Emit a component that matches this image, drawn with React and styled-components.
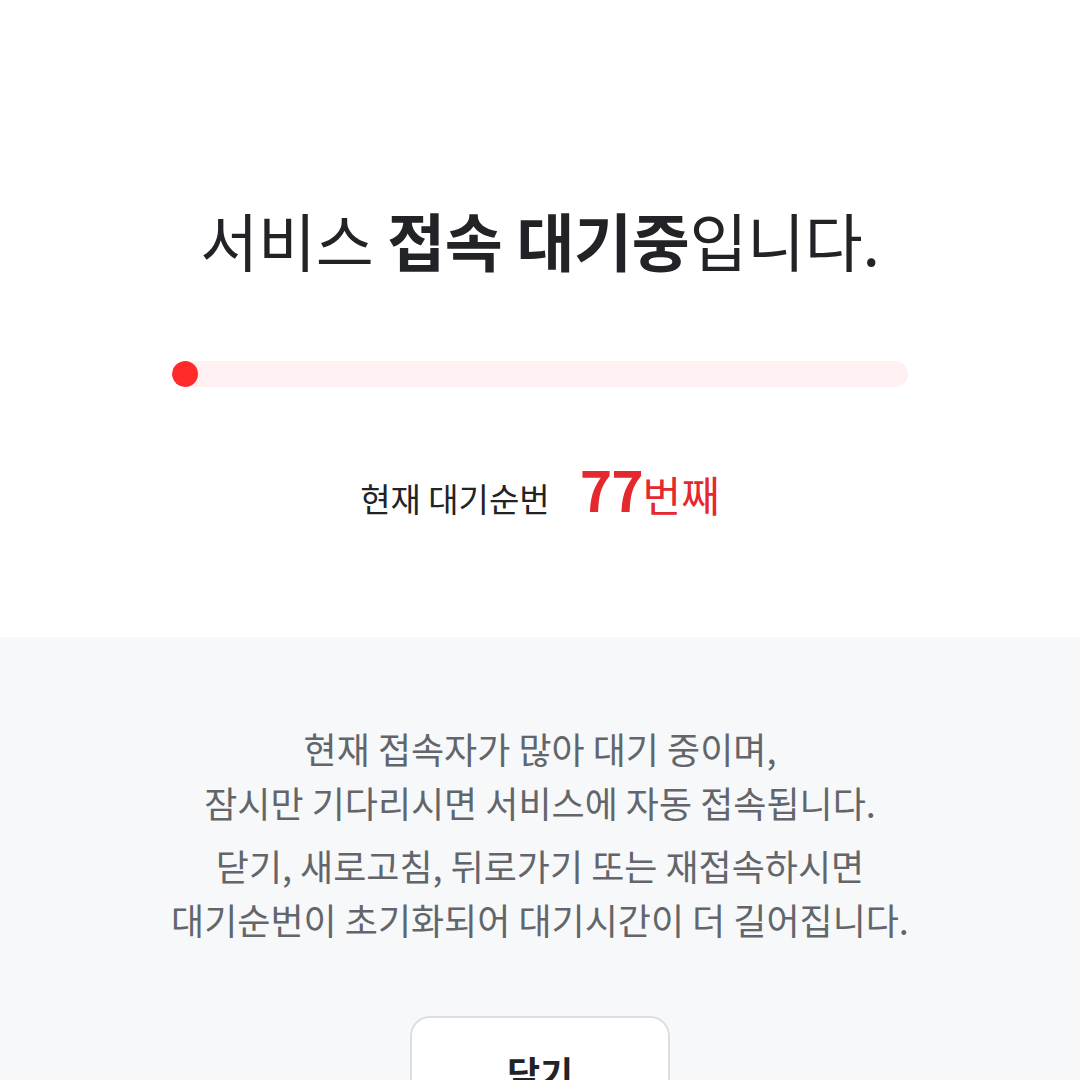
import React from 'react'
import styled, {createGlobalStyle} from 'styled-components'

const GlobalStyle = createGlobalStyle`
    html, body {
        margin : 0;
        padding : 0;
        background : #ffffff;
    }
    body {
        font-family : "Noto Sans CJK KR", "Noto Sans", sans-serif;
        color : #222326;
    }
`;

const App = () => {
    const rank = 77;
    const progress = 3.5; // percent

    return (<>
        <GlobalStyle />
        <Page>
            <Top>
                <Title>
                    서비스 <strong>접속 대기중</strong>입니다.
                </Title>
                <Track>
                    <Fill style={{width : `${progress}%`}} />
                </Track>
                <Queue>
                    <span className="label">현재 대기순번</span>
                    <span className="rank">
                        <b>{rank}</b>번째
                    </span>
                </Queue>
            </Top>
            <Bottom>
                <Notice>
                    현재 접속자가 많아 대기 중이며,<br />
                    잠시만 기다리시면 서비스에 자동 접속됩니다.
                </Notice>
                <Notice>
                    닫기, 새로고침, 뒤로가기 또는 재접속하시면<br />
                    대기순번이 초기화되어 대기시간이 더 길어집니다.
                </Notice>
                <CloseButton type="button">닫기</CloseButton>
            </Bottom>
        </Page>
    </>);
}

const Page = styled.div`
    display : flex;
    flex-direction : column;
    min-height : 1080px;
    overflow : hidden;
`;

const Top = styled.section`
    display : flex;
    flex-direction : column;
    align-items : center;
    padding : 196px 0 119px;
    background : #ffffff;
`;

const Title = styled.h1`
    margin : 0;
    font-size : 63px;
    line-height : 86px;
    font-weight : 400;
    color : #222326;
    letter-spacing : -0.3px;
    strong {
        font-weight : 700;
    }
`;

const Track = styled.div`
    margin-top : 79px;
    width : 736px;
    height : 26px;
    border-radius : 13px;
    background : #fff0f1;
    overflow : hidden;
`;

const Fill = styled.div`
    height : 100%;
    min-width : 26px;
    border-radius : 13px;
    background : #ff2b2b;
`;

const Queue = styled.div`
    display : flex;
    align-items : baseline;
    gap : 30px;
    margin-top : 71px;
    height : 60px;
    line-height : 60px;
    .label {
        font-size : 33px;
        color : #222326;
    }
    .rank {
        font-size : 42px;
        color : #e5282d;
        b {
            font-size : 55px;
            font-weight : 700;
            letter-spacing : -1px;
        }
    }
`;

const Bottom = styled.section`
    flex : 1;
    display : flex;
    flex-direction : column;
    align-items : center;
    padding-top : 84px;
    background : #f7f8fa;
`;

const Notice = styled.p`
    margin : 0;
    font-size : 36px;
    line-height : 54px;
    color : #62666b;
    text-align : center;
    & + & {
        margin-top : 9px;
    }
`;

const CloseButton = styled.button`
    margin-top : 70px;
    width : 260px;
    height : 112px;
    flex-shrink : 0;
    border : 2px solid #dcdee2;
    border-radius : 20px;
    background : #ffffff;
    font-family : inherit;
    font-size : 36px;
    font-weight : 700;
    color : #222326;
`;

export default App;
